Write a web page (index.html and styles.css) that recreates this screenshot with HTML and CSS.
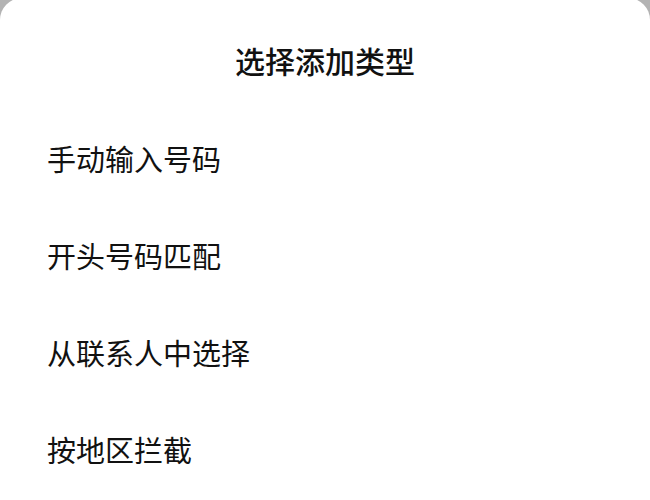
FILE: index.html
```html
<!DOCTYPE html>
<html lang="zh-CN">
<head>
<meta charset="utf-8">
<link rel="stylesheet" href="styles.css">
</head>
<body>
<div class="sheet">
  <div class="title">选择添加类型</div>
  <ul class="options">
    <li class="option">手动输入号码</li>
    <li class="option">开头号码匹配</li>
    <li class="option">从联系人中选择</li>
    <li class="option">按地区拦截</li>
  </ul>
</div>
</body>
</html>
```
FILE: styles.css
```css
html, body {
  margin: 0;
  padding: 0;
  height: 100%;
  background: #b3b3b3;
  overflow: hidden;
}
body {
  font-family: "Noto Sans CJK SC", "Noto Sans", sans-serif;
  color: #111;
}
.sheet {
  background: #fff;
  margin-top: -2px;
  border-radius: 22px 22px 0 0;
  height: 510px;
  padding-top: 47px;
  box-sizing: border-box;
}
.title {
  text-align: center;
  font-size: 30px;
  line-height: 30px;
  font-weight: 500;
}
.options {
  list-style: none;
  margin: 35px 0 0;
  padding: 0 0 0 47px;
}
.option {
  font-size: 29px;
  line-height: 97px;
  height: 97px;
  font-weight: 400;
}
```
